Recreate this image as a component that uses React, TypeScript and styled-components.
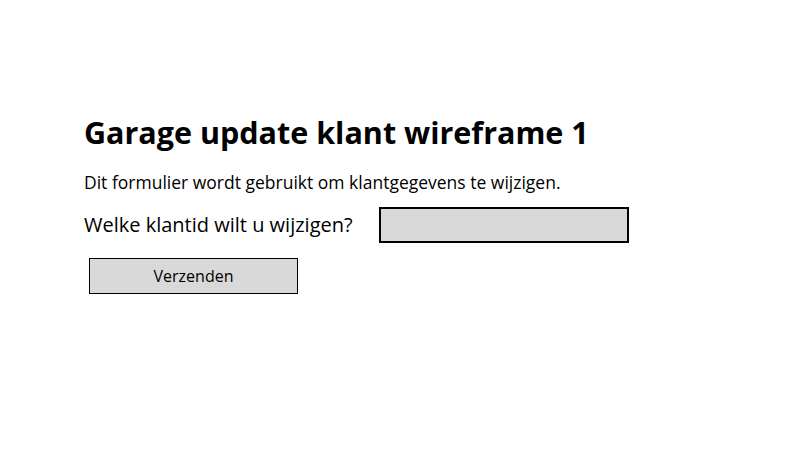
import { FC } from "react";
import styled, { createGlobalStyle } from "styled-components";

const GlobalStyle = createGlobalStyle`
	html, body {
		margin: 0;
		padding: 0;
		background: #ffffff;
	}
	body {
		font-family: "Open Sans", "Noto Sans", sans-serif;
		color: #000000;
	}
`;

const App: FC = () => {
	return (
		<>
			<GlobalStyle />
			<Page>
				<Title>Garage update klant wireframe 1</Title>
				<Intro>Dit formulier wordt gebruikt om klantgegevens te wijzigen.</Intro>
				<Row>
					<Label htmlFor='klantid'>Welke klantid wilt u wijzigen?</Label>
					<Input id='klantid' type='text' />
				</Row>
				<SubmitButton type='button'>Verzenden</SubmitButton>
			</Page>
		</>
	);
};

export default App;

const Page = styled.div`
	width: 800px;
	height: 452px;
	box-sizing: border-box;
	padding: 112px 0 0 84px;
	display: flex;
	flex-direction: column;
	align-items: flex-start;
`;

const Title = styled.h1`
	margin: 0;
	font-size: 30.5px;
	line-height: 40px;
	font-weight: 700;
`;

const Intro = styled.p`
	margin: 18px 0 0;
	font-size: 17.5px;
	line-height: 24px;
`;

const Row = styled.div`
	display: flex;
	align-items: center;
	gap: 26px;
	margin-top: 13px;
`;

const Label = styled.label`
	font-size: 20px;
	line-height: 36px;
`;

const Input = styled.input`
	width: 250px;
	height: 36px;
	box-sizing: border-box;
	background: #d9d9d9;
	border: 2px solid #000000;
	outline: none;
	padding: 0 8px;
	font-family: inherit;
`;

const SubmitButton = styled.button`
	margin: 15px 0 0 5px;
	width: 209px;
	height: 36px;
	box-sizing: border-box;
	background: #d9d9d9;
	border: 1px solid #000000;
	font-family: "Open Sans", "Noto Sans", sans-serif;
	font-size: 16px;
	color: #000000;
	cursor: pointer;
`;
